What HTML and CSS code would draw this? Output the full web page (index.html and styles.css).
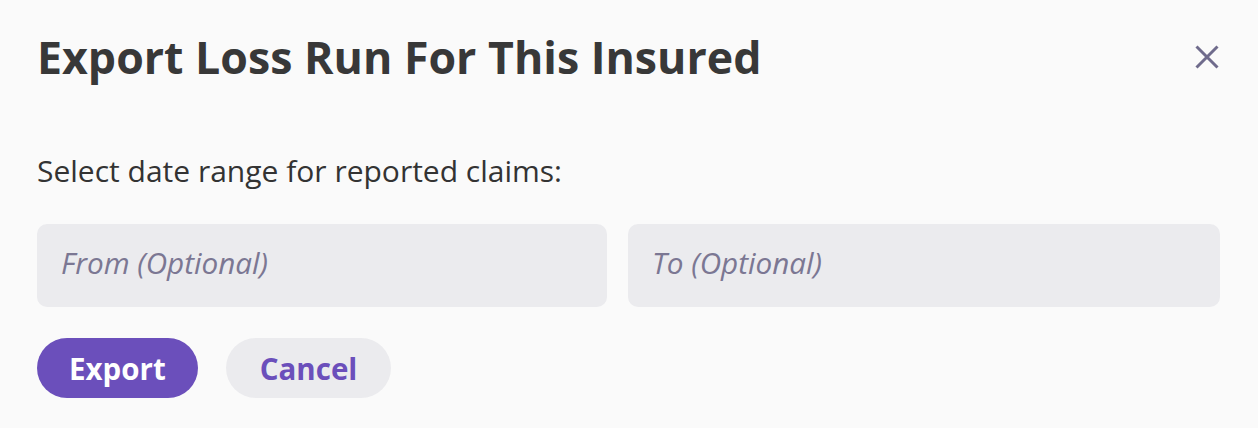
FILE: index.html
```html
<!DOCTYPE html>
<html lang="en">
<head>
<meta charset="utf-8">
<title>Export Loss Run</title>
<link rel="stylesheet" href="styles.css">
</head>
<body>
<div class="dialog">
  <div class="header">
    <h1 class="title">Export Loss Run For This Insured</h1>
    <button class="close" aria-label="Close">
      <svg width="24" height="24" viewBox="0 0 24 24"><path d="M1.5 1.5 L22.5 22.5 M22.5 1.5 L1.5 22.5" stroke="#6f6b8c" stroke-width="3" stroke-linecap="butt" fill="none"/></svg>
    </button>
  </div>
  <p class="label">Select date range for reported claims:</p>
  <div class="fields">
    <input class="field field-from" type="text" placeholder="From (Optional)">
    <input class="field field-to" type="text" placeholder="To (Optional)">
  </div>
  <div class="actions">
    <button class="btn btn-primary">Export</button>
    <button class="btn btn-secondary">Cancel</button>
  </div>
</div>
</body>
</html>
```
FILE: styles.css
```css
html, body {
  margin: 0;
  padding: 0;
  background: #fafafa;
}
body {
  font-family: "Open Sans", "Liberation Sans", sans-serif;
  color: #333333;
}
.dialog {
  padding: 27px 38px 0 37px;
}
.header {
  display: flex;
  justify-content: space-between;
  align-items: center;
}
.title {
  margin: 0;
  font-size: 44.7px;
  font-weight: 700;
  line-height: 60px;
  color: #383838;
}
.close {
  border: none;
  background: none;
  padding: 0;
  margin: 0 1px 1px 0;
  width: 24px;
  height: 24px;
  display: flex;
  cursor: pointer;
}
.label {
  margin: 64px 0 0 0;
  font-size: 30px;
  line-height: 40px;
  color: #333333;
}
.fields {
  display: flex;
  gap: 21px;
  margin-top: 33px;
}
.field {
  height: 83px;
  box-sizing: border-box;
  border: none;
  border-radius: 10px;
  background: #ebebee;
  padding: 0 24px 6px 24px;
  font-family: "Open Sans", "Liberation Sans", sans-serif;
  font-size: 29.7px;
  font-style: italic;
  color: #333;
}
.field-from {
  flex: 0 0 570px;
}
.field-to {
  flex: 1 1 auto;
}
.field::placeholder {
  color: #7b7793;
  font-style: italic;
}
.actions {
  display: flex;
  gap: 28px;
  margin-top: 31px;
}
.btn {
  height: 60px;
  border: none;
  border-radius: 30px;
  font-family: "Open Sans", "Liberation Sans", sans-serif;
  font-weight: 700;
  font-size: 29.5px;
  cursor: pointer;
}
.btn-primary {
  padding: 0 32px 0 32px;
  background: #6b4fbb;
  color: #ffffff;
}
.btn-secondary {
  padding: 0 34px;
  background: #ebebee;
  color: #6b4fbb;
}
```
